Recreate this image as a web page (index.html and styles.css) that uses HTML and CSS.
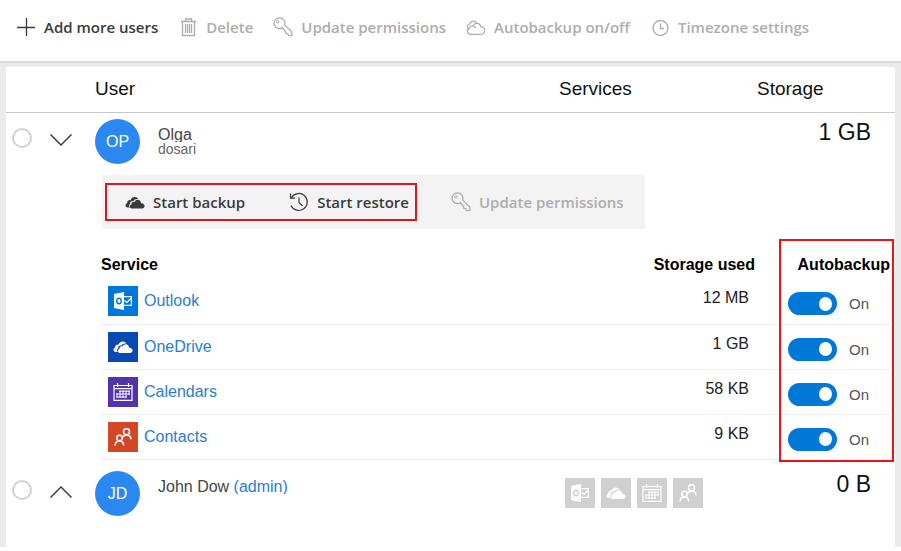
FILE: index.html
```html
<!DOCTYPE html>
<html lang="en">
<head>
	<meta charset="utf-8">
	<title>Users</title>
	<link rel="stylesheet" href="styles.css">
</head>
<body>

	<!-- shared icons -->
	<svg class="defs" aria-hidden="true">
		<symbol id="key" viewBox="0 0 20 20">
			<path d="M10.100 10.200A5.400 5.400 0 1 1 11.600 7.900L18.600 14.700 19 18.400 15.500 18.600 14.800 16.600 12.800 16.200 12.300 14.100 9.200 10.700" fill="none" stroke="currentColor" stroke-width="1.300" stroke-linejoin="round"/>
			<circle cx="4.800" cy="4.800" r="1.200" fill="none" stroke="currentColor"/>
		</symbol>
		<symbol id="drive" viewBox="0 0 20 13">
			<path d="M4.900 11.500H2.600C0 11.300-.3 7.800 2.200 7.200 1.800 4.800 4 3.500 5.600 4 6.600.3 11.800-.2 13.300 3 10.800 2.600 9.200 3.500 8.500 5 6.300 4.700 5 6 5 8c-1.300.8-1.300 2.500-.1 3.500z" fill="currentColor"/>
			<path d="M6.800 12.500C4.300 12.400 4.100 9 6.400 8.600 6.200 6.200 8.300 5.400 9.600 6 10.800 2.700 15.700 3.100 16.100 7.200c4.200-.2 4.700 5.100 1.100 5.300z" fill="currentColor"/>
		</symbol>
		<symbol id="outlook" viewBox="0 0 20 18">
			<path d="M1 2 11 0v18L1 16z" fill="currentColor"/>
			<ellipse cx="6" cy="9" rx="2.200" ry="2.800" fill="none" stroke="var(--tile)" stroke-width="1.400"/>
			<path d="M11 4.700h7.400v8.600H11M11.500 8.500l2.400 2 4.500-4.500" fill="none" stroke="currentColor" stroke-width="1.200"/>
		</symbol>
		<symbol id="calendar" viewBox="0 0 20 18">
			<path d="M1 2.500h18v14.800H1zM1 5.700h18M4.500 0v4M15.500 0v4" fill="none" stroke="currentColor" stroke-width="1.200"/>
			<path d="M6 8.200h11M3.500 11h13.500M3.500 14h10M4 10v5M7 7.500v7.500M10 7.500v7.500M13 7.500v7.500M16 7.500v4.500" fill="none" stroke="currentColor"/>
		</symbol>
		<symbol id="contacts" viewBox="0 0 18 18">
			<g fill="none" stroke="currentColor" stroke-width="1.500">
				<circle cx="5.500" cy="10" r="2.800"/>
				<path d="M1 17.500c.2-3 2-4.500 4.500-4.500s4 1.500 4.200 4.500"/>
				<circle cx="12.500" cy="3.700" r="3"/>
				<path d="M8.800 9.200c.7-1.500 2-2.300 3.700-2.300 2.700 0 4.300 1.400 4.500 4.300"/>
			</g>
		</symbol>
	</svg>

	<div class="toolbar">
		<button type="button" class="tool">
			<svg class="icon" viewBox="0 0 20 20"><path d="M10.500 1v18M1 10.500h18" fill="none" stroke="currentColor" stroke-width="1.300"/></svg>
			Add more users
		</button>
		<button type="button" class="tool" disabled>
			<svg class="icon" viewBox="0 0 20 20">
				<path d="M3 4.500h15M7.500 4.500V2h6v2.500M4.500 4.500v14h12v-14" fill="none" stroke="currentColor" stroke-width="1.300"/>
				<path d="M7.500 7v9M9.500 7v9M11.500 7v9M13.500 7v9" stroke="currentColor" stroke-width="1.300"/>
			</svg>
			Delete
		</button>
		<button type="button" class="tool" disabled>
			<svg class="icon"><use href="#key"/></svg>
			Update permissions
		</button>
		<button type="button" class="tool" disabled>
			<svg class="icon" viewBox="0 0 20 20">
				<path d="M5.200 17.400C.5 17.400.3 12.500 3.300 11.800 3.200 9.600 5.200 8.400 7.200 9.100 8.600 5.200 14 5.300 14.700 9.700 19.800 9.700 20 17.400 15.200 17.400zM3.300 11.800C.4 10.800.8 7.200 3.800 7 4.600 3.700 9 3 11 6.300M7.200 9.100C8.600 9.300 9.600 10 10 11" fill="none" stroke="currentColor" stroke-width="1.200"/>
			</svg>
			Autobackup on/off
		</button>
		<button type="button" class="tool" disabled>
			<svg class="icon" viewBox="0 0 20 20"><circle cx="10.500" cy="11" r="7.500" fill="none" stroke="currentColor" stroke-width="1.300"/><path d="M10.500 6.500v5h3.500" fill="none" stroke="currentColor" stroke-width="1.300"/></svg>
			Timezone settings
		</button>
	</div>

	<div class="page">
		<div class="panel">
			<div class="cols head">
				<div class="user-col">User</div>
				<div>Services</div>
				<div>Storage</div>
			</div>

			<div class="cols row">
				<div class="pick">
					<input type="checkbox" class="select" aria-label="Select Olga dosari">
					<button type="button" class="chevron" aria-label="Collapse">
						<svg viewBox="0 0 22 12"><path d="M.5.500 11 11 21.500.500" fill="none" stroke="currentColor" stroke-width="1.400"/></svg>
					</button>
				</div>
				<div class="user">
					<div class="avatar">OP</div>
					<div class="who">
						<div class="name">Olga</div>
						<div class="surname">dosari</div>
					</div>
				</div>
				<div></div>
				<div class="size">1 GB</div>
			</div>

			<div class="actions">
				<div class="marked">
					<button type="button" class="tool">
						<svg class="icon"><use href="#drive"/></svg>
						Start backup
					</button>
					<button type="button" class="tool">
						<svg class="icon" viewBox="0 0 20 20"><path d="M2.500 5.500A8.500 8.500 0 1 1 2 13.500M1.500 1.500v4.700h4.700M10 5.500v5l3.500 3.500" fill="none" stroke="currentColor" stroke-width="1.200"/></svg>
						Start restore
					</button>
				</div>
				<button type="button" class="tool" disabled>
					<svg class="icon"><use href="#key"/></svg>
					Update permissions
				</button>
			</div>

			<div class="details">
				<table class="services">
					<thead>
						<tr><th>Service</th><th class="used">Storage used</th><th class="auto">Autobackup</th></tr>
					</thead>
					<tbody>
						<tr>
							<td><a href="#" class="service"><span class="tile outlook"><svg><use href="#outlook"/></svg></span>Outlook</a></td>
							<td class="used">12 MB</td>
							<td class="auto"><label class="switch"><input type="checkbox" checked>On</label></td>
						</tr>
						<tr>
							<td><a href="#" class="service"><span class="tile onedrive"><svg><use href="#drive"/></svg></span>OneDrive</a></td>
							<td class="used">1 GB</td>
							<td class="auto"><label class="switch"><input type="checkbox" checked>On</label></td>
						</tr>
						<tr>
							<td><a href="#" class="service"><span class="tile calendars"><svg><use href="#calendar"/></svg></span>Calendars</a></td>
							<td class="used">58 KB</td>
							<td class="auto"><label class="switch"><input type="checkbox" checked>On</label></td>
						</tr>
						<tr>
							<td><a href="#" class="service"><span class="tile contacts"><svg><use href="#contacts"/></svg></span>Contacts</a></td>
							<td class="used">9 KB</td>
							<td class="auto"><label class="switch"><input type="checkbox" checked>On</label></td>
						</tr>
					</tbody>
				</table>
				<div class="highlight"></div>
			</div>

			<div class="cols row">
				<div class="pick">
					<input type="checkbox" class="select" aria-label="Select John Dow">
					<button type="button" class="chevron" aria-label="Expand">
						<svg viewBox="0 0 22 12"><path d="M.5 11.500 11 1 21.500 11.500" fill="none" stroke="currentColor" stroke-width="1.400"/></svg>
					</button>
				</div>
				<div class="user">
					<div class="avatar">JD</div>
					<div class="who">
						<div class="name">John Dow <a href="#">(admin)</a></div>
					</div>
				</div>
				<div class="tiles">
					<span class="tile"><svg><use href="#outlook"/></svg></span>
					<span class="tile"><svg><use href="#drive"/></svg></span>
					<span class="tile"><svg><use href="#calendar"/></svg></span>
					<span class="tile"><svg><use href="#contacts"/></svg></span>
				</div>
				<div class="size">0 B</div>
			</div>
		</div>
	</div>

</body>
</html>
```

FILE: styles.css
```css
* {
	box-sizing: border-box;
}
body {
	margin: 0;
	background-color: white;
	color: #222;
	font-family: "Liberation Sans", Arial, sans-serif;
	font-size: 16px;
}
a {
	color: #2b7cd3;
	text-decoration: none;
}
.defs {
	display: none;
}

/* top toolbar */
.toolbar {
	display: flex;
	align-items: center;
	gap: 20px;
	height: 63px;
	padding: 0 16px 7px;
	border-bottom: 2px solid #dadada;
}
.tool {
	display: flex;
	align-items: center;
	gap: 8px;
	padding: 0;
	border: 0;
	background: none;
	color: #3b3b3b;
	font: 600 15px/20px "Open Sans", "Segoe UI", sans-serif;
	white-space: nowrap;
}
.tool:disabled {
	color: #adadad;
}
.icon {
	width: 20px;
	height: 20px;
}

/* user list */
.page {
	padding: 4px 6px 0;
	background-color: #ebebeb;
}
.panel {
	padding-bottom: 25px;
	background-color: white;
}
.cols {
	display: grid;
	grid-template-columns: 89px 1fr 198px 138px;
}
.head {
	padding: 11px 0 12px;
	border-bottom: 1px solid #c8c8c8;
	color: #111;
	font-size: 19px;
	line-height: 22px;
}
.user-col {
	grid-column: 2;
}
.row {
	padding: 6px 0;
}
.pick {
	display: flex;
	align-items: flex-start;
	gap: 18px;
	padding: 9px 0 0 6px;
}
.select {
	appearance: none;
	width: 20px;
	height: 20px;
	margin: 0;
	border: 2px solid #d2d2d2;
	border-radius: 50%;
}
.chevron {
	padding: 4px 0 0;
	border: 0;
	background: none;
	color: #333;
	line-height: 20px;
}
.chevron svg {
	width: 22px;
	height: 12px;
}
.user {
	display: flex;
	gap: 18px;
}
.avatar {
	width: 45px;
	height: 45px;
	border-radius: 50%;
	background-color: #2b88f0;
	color: white;
	line-height: 45px;
	text-align: center;
}
.who {
	padding-top: 6px;
	color: #444;
}
/* one line, descenders cut off */
.name {
	overflow: hidden;
	height: 17px;
	line-height: 20px;
}
.surname {
	color: #666;
	font-size: 14px;
	line-height: 14px;
}
.size {
	padding-right: 24px;
	color: #111;
	font-size: 23px;
	line-height: 26px;
	text-align: right;
}

/* actions for the open user */
.actions {
	display: flex;
	align-items: center;
	width: 543px;
	height: 54px;
	margin: 5px 0 0 96px;
	padding: 0 3px;
	background-color: #f3f3f3;
}
.marked {
	display: flex;
	align-items: center;
	gap: 44px;
	height: 38px;
	margin-right: 34px;
	padding: 0 6px 0 18px;
	border: 2px solid #d91920;
}
.marked .icon:has([href="#drive"]) {
	height: 13px;
}

/* services table */
.details {
	position: relative;
	padding: 22px 5px 5px 95px;
}
.services {
	width: 100%;
	border-collapse: collapse;
}
.services th {
	height: 28px;
	padding: 0;
	color: #000;
	text-align: left;
}
.services td {
	height: 45px;
	padding: 0;
	border-bottom: 1px solid #efefef;
}
.services .used {
	width: 180px;
	padding-right: 33px;
	text-align: right;
}
.services td.used {
	padding: 0 39px 6px 0;
}
.services .auto {
	width: 102px;
}
.services th.auto {
	text-align: right;
}
.service {
	display: flex;
	align-items: center;
	gap: 6px;
	padding-left: 7px;
}
.tile {
	--tile: #d0d0d0;
	display: flex;
	align-items: center;
	justify-content: center;
	width: 30px;
	height: 30px;
	background-color: var(--tile);
	color: white;
}
.tile svg {
	width: 20px;
	height: 18px;
}
.tile.outlook {
	--tile: #0078d7;
}
.tile.onedrive {
	--tile: #094ab2;
}
.tile.calendars {
	--tile: #5133ab;
}
.tile.contacts {
	--tile: #d24726;
}
.switch {
	display: flex;
	align-items: center;
	gap: 12px;
	padding-top: 5px;
	color: #555;
	font-size: 15px;
}
.switch input {
	appearance: none;
	display: flex;
	align-items: center;
	justify-content: flex-start;
	width: 49px;
	height: 23px;
	margin: 0;
	padding: 0 5px;
	border-radius: 12px;
	background-color: #a6a6a6;
}
.switch input::before {
	content: "";
	width: 13px;
	height: 14px;
	border-radius: 50%;
	background-color: white;
}
.switch input:checked {
	justify-content: flex-end;
	background-color: #0078d7;
}
.highlight {
	position: absolute;
	top: 10px;
	right: 1px;
	bottom: 3px;
	width: 115px;
	border: 2px solid #e8131b;
	pointer-events: none;
}
.tiles {
	display: flex;
	gap: 6px;
	padding: 7px 0 0 6px;
}
```
